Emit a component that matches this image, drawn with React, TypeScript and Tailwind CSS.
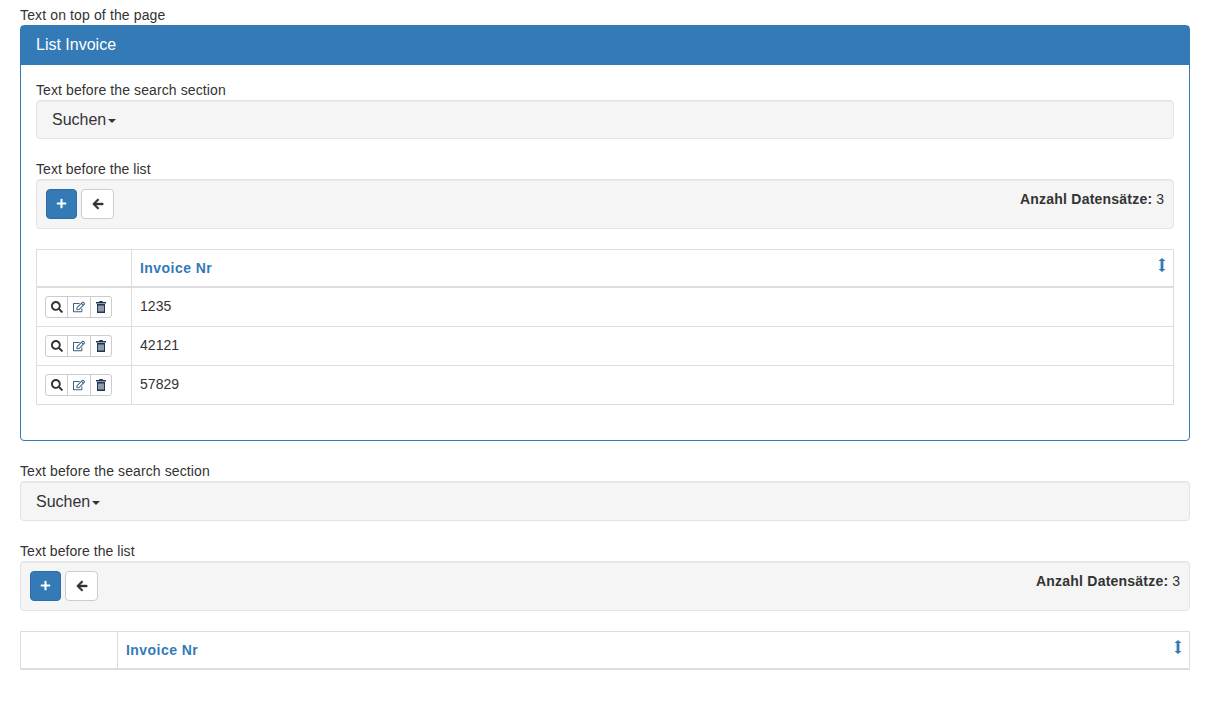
import { FaArrowLeft, FaPlus, FaRegEdit, FaSearch } from "react-icons/fa"

const invoices = ["1235", "42121", "57829"]

function SearchSection({ height }: { height: string }) {
  return (
    <div>
      <p className="tracking-[0.1px]">Text before the search section</p>
      <div className={`${height} mb-5 flex items-center pl-[15px] bg-[#f5f5f5] border border-[#e3e3e3] rounded shadow-[inset_0_1px_1px_rgba(0,0,0,0.05)] text-base`}>
        Suchen
        <span className="ml-0.5 mt-0.5 border-x-4 border-x-transparent border-t-4 border-t-[#333]" />
      </div>
    </div>
  )
}

function Toolbar() {
  return (
    <div>
      <p className="tracking-[0.05px]">Text before the list</p>
      <div className="h-[50px] mb-5 flex justify-between p-[9px] bg-[#f5f5f5] border border-[#e3e3e3] rounded shadow-[inset_0_1px_1px_rgba(0,0,0,0.05)]">
        <div className="flex gap-1">
          <button className="w-[31px] h-[30px] pb-0.5 flex items-center justify-center bg-[#337ab7] border border-[#2e6da4] rounded text-white">
            <FaPlus className="w-[11px] h-[11px]" />
          </button>
          <button className="w-[33px] h-[30px] flex items-center justify-center bg-white border border-[#ccc] rounded text-[#333]">
            <FaArrowLeft className="w-3 h-3 stroke-[20]" />
          </button>
        </div>
        <div>
          <b className="tracking-[0.22px]">Anzahl Datensätze:</b> 3
        </div>
      </div>
    </div>
  )
}

function SortIcon() {
  return (
    <svg width="8" height="14" viewBox="0 0 8 14" className="absolute right-[7px] top-2 text-[#337ab7]" fill="currentColor">
      <path d="M4 0 7.5 3H5.4v8H7.5L4 14 .5 11h2.1V3H.5z" />
    </svg>
  )
}

function TrashIcon() {
  return (
    <svg width="10" height="12" viewBox="0 0 10 12" fill="currentColor" className="text-[#1f3550]">
      <path d="M3.5 0h3l.5 1h3v1.5H0V1h3zM1 3h8v9H1zm1.5 1.5v6h1v-6zm2 0v6h1v-6zm2 0v6h1v-6z" fillRule="evenodd" />
    </svg>
  )
}

function RowActions() {
  return (
    <div className="flex w-[67px] h-[22px] bg-white border border-[#ccc] rounded-[3px] text-[#333]">
      <span className="w-[21px] flex items-center justify-center">
        <FaSearch className="w-3 h-3" />
      </span>
      <span className="w-[23px] flex items-center justify-center border-l border-[#ccc]">
        <FaRegEdit className="w-3 h-3 text-[#3b5f80]" />
      </span>
      <span className="flex-1 flex items-center justify-center border-l border-[#ccc]">
        <TrashIcon />
      </span>
    </div>
  )
}

function InvoiceTable({ rows, firstCol }: { rows: string[]; firstCol: string }) {
  return (
    <table className="w-full border-collapse border border-[#ddd]">
      <thead>
        <tr>
          <th className={`${firstCol} h-[37px] border border-b-2 border-[#ddd]`} />
          <th className="relative h-[37px] px-2 text-left font-bold text-[#337ab7] border border-b-2 border-[#ddd] tracking-[0.45px]">
            Invoice Nr
            <SortIcon />
          </th>
        </tr>
      </thead>
      <tbody className="[&>tr:first-child>td]:h-[40px] [&>tr:first-child>td:first-child]:pb-0 [&>tr:first-child>td:first-child]:pt-px">
        {rows.map((nr) => (
          <tr key={nr}>
            <td className="h-[39px] px-2 pb-px border border-[#ddd]">
              <RowActions />
            </td>
            <td className="h-[39px] px-2 pb-0.5 border border-[#ddd] tracking-[0.05px]">{nr}</td>
          </tr>
        ))}
      </tbody>
    </table>
  )
}

export default function App() {
  return (
    <div className="w-[1170px] ml-5 pt-[5px] text-sm leading-5 text-[#333] font-['Liberation_Sans',Arial,sans-serif]">
      <p className="tracking-[0.13px]">Text on top of the page</p>
      <div className="mb-5 border border-[#337ab7] rounded">
        <div className="h-[39px] flex items-center px-[15px] pb-0.5 bg-[#337ab7] text-white text-base">List Invoice</div>
        <div className="pt-[15px] px-[15px] pb-[35px]">
          <SearchSection height="h-[39px]" />
          <Toolbar />
          <InvoiceTable rows={invoices} firstCol="w-[95px]" />
        </div>
      </div>
      <SearchSection height="h-[40px] pt-px" />
      <Toolbar />
      <InvoiceTable rows={[]} firstCol="w-[97px]" />
    </div>
  )
}
